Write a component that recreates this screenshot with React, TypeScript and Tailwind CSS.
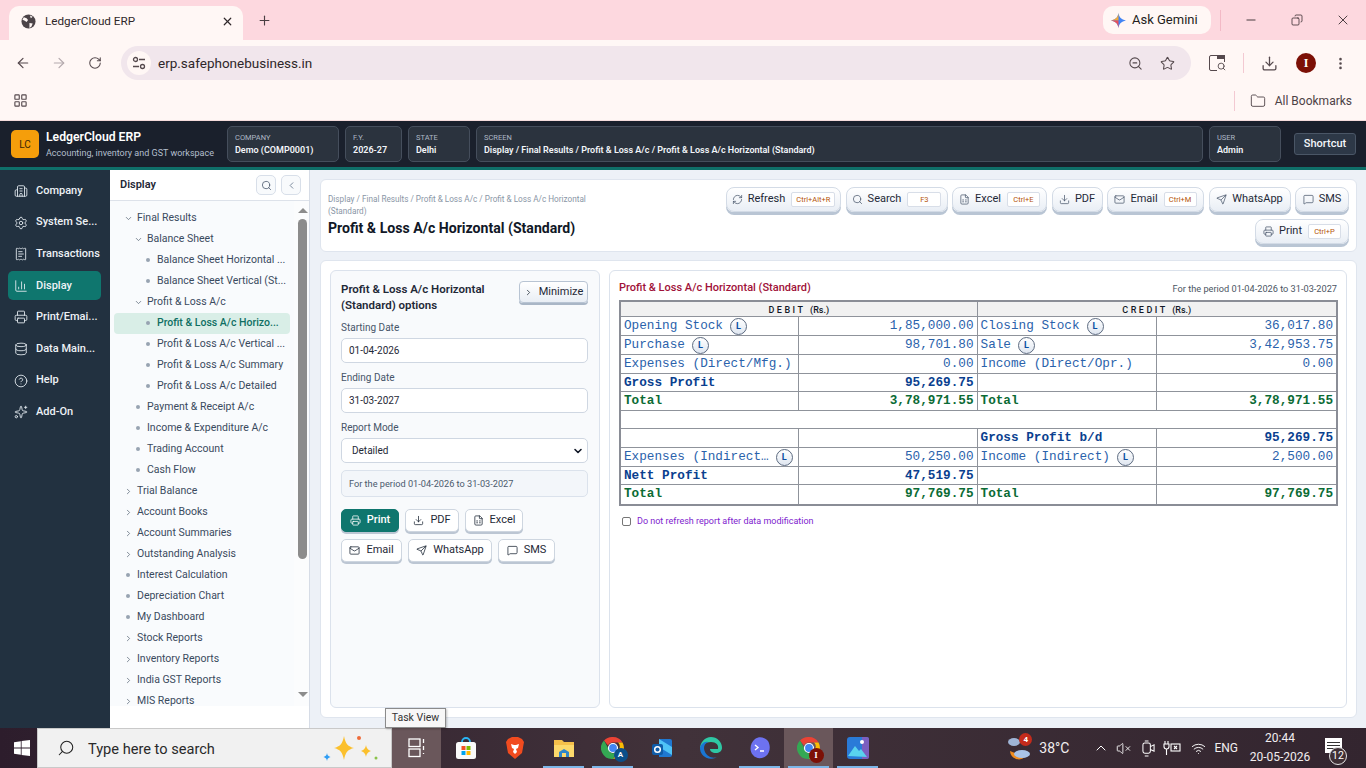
import {
  ArrowLeft,
  ArrowRight,
  BatteryWarning,
  Building2,
  ChartColumn,
  ChevronDown,
  ChevronLeft,
  ChevronRight,
  ChevronUp,
  CircleHelp,
  Copy,
  Database,
  Download,
  FileSpreadsheet,
  Folder,
  LayoutGrid,
  Mail,
  MessageSquare,
  Minus,
  MoreVertical,
  Plus,
  Printer,
  ReceiptText,
  RefreshCw,
  RotateCw,
  Search,
  Send,
  Settings,
  Sparkles,
  Star,
  VolumeX,
  Wifi,
  X,
  ZoomOut,
} from "lucide-react";
import type { ReactNode } from "react";

const railItems = [
  { label: "Company", icon: Building2 },
  { label: "System Se...", icon: Settings },
  { label: "Transactions", icon: ReceiptText },
  { label: "Display", icon: ChartColumn, active: true },
  { label: "Print/Emai...", icon: Printer },
  { label: "Data Main...", icon: Database },
  { label: "Help", icon: CircleHelp },
  { label: "Add-On", icon: Sparkles },
];

type TreeRow = { label: string; level: number; kind: "open" | "closed" | "leaf"; active?: boolean };

const treeRows: TreeRow[] = [
  { label: "Final Results", level: 0, kind: "open" },
  { label: "Balance Sheet", level: 1, kind: "open" },
  { label: "Balance Sheet Horizontal ...", level: 2, kind: "leaf" },
  { label: "Balance Sheet Vertical (St...", level: 2, kind: "leaf" },
  { label: "Profit & Loss A/c", level: 1, kind: "open" },
  { label: "Profit & Loss A/c Horizo...", level: 2, kind: "leaf", active: true },
  { label: "Profit & Loss A/c Vertical ...", level: 2, kind: "leaf" },
  { label: "Profit & Loss A/c Summary", level: 2, kind: "leaf" },
  { label: "Profit & Loss A/c Detailed", level: 2, kind: "leaf" },
  { label: "Payment & Receipt A/c", level: 1, kind: "leaf" },
  { label: "Income & Expenditure A/c", level: 1, kind: "leaf" },
  { label: "Trading Account", level: 1, kind: "leaf" },
  { label: "Cash Flow", level: 1, kind: "leaf" },
  { label: "Trial Balance", level: 0, kind: "closed" },
  { label: "Account Books", level: 0, kind: "closed" },
  { label: "Account Summaries", level: 0, kind: "closed" },
  { label: "Outstanding Analysis", level: 0, kind: "closed" },
  { label: "Interest Calculation", level: 0, kind: "leaf" },
  { label: "Depreciation Chart", level: 0, kind: "leaf" },
  { label: "My Dashboard", level: 0, kind: "leaf" },
  { label: "Stock Reports", level: 0, kind: "closed" },
  { label: "Inventory Reports", level: 0, kind: "closed" },
  { label: "India GST Reports", level: 0, kind: "closed" },
  { label: "MIS Reports", level: 0, kind: "closed" },
];

const toolButtons = [
  { label: "Refresh", icon: RefreshCw, keys: "Ctrl+Alt+R", width: "w-[115px]", kbd: "w-[44px]" },
  { label: "Search", icon: Search, keys: "F3", width: "w-[102px]", kbd: "w-[34px]" },
  { label: "Excel", icon: FileSpreadsheet, keys: "Ctrl+E", width: "w-[95px]", kbd: "w-[33px]" },
  { label: "PDF", icon: Download, width: "w-[51px]" },
  { label: "Email", icon: Mail, keys: "Ctrl+M", width: "w-[97px]", kbd: "w-[33px]" },
  { label: "WhatsApp", icon: Send, width: "w-[82px]" },
  { label: "SMS", icon: MessageSquare, width: "w-[54px]" },
  { label: "Print", icon: Printer, keys: "Ctrl+P", width: "w-[94px]", kbd: "w-[33px]" },
];

type Cell = { text?: string; ledger?: boolean };
type ReportRow = { height: string; tone: "plain" | "bold" | "total"; cells: [Cell, Cell, Cell, Cell] };

const reportTop: ReportRow[] = [
  { height: "h-[19px]", tone: "plain", cells: [{ text: "Opening Stock", ledger: true }, { text: "1,85,000.00" }, { text: "Closing Stock", ledger: true }, { text: "36,017.80" }] },
  { height: "h-[19px]", tone: "plain", cells: [{ text: "Purchase", ledger: true }, { text: "98,701.80" }, { text: "Sale", ledger: true }, { text: "3,42,953.75" }] },
  { height: "h-[19px]", tone: "plain", cells: [{ text: "Expenses (Direct/Mfg.)" }, { text: "0.00" }, { text: "Income (Direct/Opr.)" }, { text: "0.00" }] },
  { height: "h-[18px]", tone: "bold", cells: [{ text: "Gross Profit" }, { text: "95,269.75" }, {}, {}] },
  { height: "h-[19px]", tone: "total", cells: [{ text: "Total" }, { text: "3,78,971.55" }, { text: "Total" }, { text: "3,78,971.55" }] },
];

const reportBottom: ReportRow[] = [
  { height: "h-[19px]", tone: "bold", cells: [{}, {}, { text: "Gross Profit b/d" }, { text: "95,269.75" }] },
  { height: "h-[19px]", tone: "plain", cells: [{ text: "Expenses (Indirect…", ledger: true }, { text: "50,250.00" }, { text: "Income (Indirect)", ledger: true }, { text: "2,500.00" }] },
  { height: "h-[18px]", tone: "bold", cells: [{ text: "Nett Profit" }, { text: "47,519.75" }, {}, {}] },
  { height: "h-[20px]", tone: "total", cells: [{ text: "Total" }, { text: "97,769.75" }, { text: "Total" }, { text: "97,769.75" }] },
];

function ToolButton({ label, icon: Icon, keys, width, kbd }: (typeof toolButtons)[number]) {
  return (
    <button className={`flex h-[25px] items-center justify-center gap-[5px] rounded-lg border border-[#d3dbe6] bg-gradient-to-b from-white to-[#e9eef5] text-[11px] text-[#1f2937] shadow-[0_3px_0_#b9c5d4] ${width}`}>
      <Icon size={11} strokeWidth={1.6} className="text-[#475569]" />
      {label}
      {keys && (
        <span className={`ml-[1px] flex h-[15px] items-center justify-center rounded-[2px] border border-[#d8dee8] bg-white text-[7.5px] text-[#b45309] ${kbd}`}>
          {keys}
        </span>
      )}
    </button>
  );
}

function ActionButton({ label, icon: Icon, width, primary }: { label: string; icon: typeof Mail; width: string; primary?: boolean }) {
  return (
    <button
      className={`flex h-[23px] items-center justify-center gap-[6px] rounded-[5px] border text-[11px] shadow-[0_2px_0_#bcc6d3] ${width} ${
        primary ? "border-[#0f766e] bg-[#0f766e] font-medium text-white" : "border-[#ced6e0] bg-white text-[#1f2937]"
      }`}
    >
      <Icon size={11} strokeWidth={1.7} />
      {label}
    </button>
  );
}

function Field({ label, children }: { label: string; children: ReactNode }) {
  return (
    <div className="flex flex-col">
      <span className="mb-[3px] h-[14px] text-[10px] leading-[14px] text-[#475569]">{label}</span>
      {children}
    </div>
  );
}

function HeaderPill({ label, value, width }: { label: string; value: string; width: string }) {
  return (
    <div className={`flex h-[36px] shrink-0 flex-col justify-center rounded-[5px] border border-[#454e5c] bg-[#2b333e] px-[7px] ${width}`}>
      <span className="text-[7.5px] leading-[12px] text-[#aeb8c5]">{label}</span>
      <span className="text-[9px] font-semibold leading-[13px] text-[#f3f6fa]">{value}</span>
    </div>
  );
}

function LedgerBadge() {
  return (
    <span className="ml-[7px] inline-flex h-[17px] w-[17px] shrink-0 items-center justify-center rounded-full border border-[#5d6b80] bg-gradient-to-b from-white to-[#dfe6f0] font-['Inter',sans-serif] text-[9px] font-bold text-[#0b4ea2]">
      L
    </span>
  );
}

function ReportRows({ rows }: { rows: ReportRow[] }) {
  const tones = {
    plain: "text-[#2a62ab]",
    bold: "font-bold text-[#0a3f8f]",
    total: "font-bold text-[#0b6b35]",
  };
  return (
    <>
      {rows.map((row, index) => (
        <tr key={index} className={`${row.height} ${tones[row.tone]}`}>
          {row.cells.map((cell, cellIndex) => (
            <td
              key={cellIndex}
              className={`overflow-hidden border border-[#8f939b] py-0 pl-[3px] pr-[3px] align-middle leading-[16px] ${cellIndex % 2 === 1 ? "text-right" : "text-left"}`}
            >
              {cell.text && (
                <span className="flex items-center whitespace-nowrap">
                  <span className={cellIndex % 2 === 1 ? "ml-auto" : ""}>{cell.text}</span>
                  {cell.ledger && <LedgerBadge />}
                </span>
              )}
            </td>
          ))}
        </tr>
      ))}
    </>
  );
}

function ChromeLogo({ badge }: { badge: ReactNode }) {
  return (
    <span className="relative block h-[24px] w-[24px]">
      <svg viewBox="0 0 24 24" className="h-[24px] w-[24px]">
        <path d="M12 1a11 11 0 0 1 9.5 5.5H12a5.5 5.5 0 0 0-5 3L3 4.5A11 11 0 0 1 12 1z" fill="#ea4335" />
        <path d="M21.5 6.5A11 11 0 0 1 12 23l4.8-8.2a5.5 5.5 0 0 0 .2-8.3z" fill="#fbbc04" />
        <path d="M12 23A11 11 0 0 1 3 4.5l4.6 8.6A5.5 5.5 0 0 0 12 17.5l4.8-2.7z" fill="#34a853" />
        <circle cx="12" cy="12" r="4.5" fill="#4285f4" stroke="#fff" strokeWidth="1.2" />
      </svg>
      {badge}
    </span>
  );
}

function TaskIcon({ children, width, running, active }: { children: ReactNode; width: string; running?: boolean; active?: boolean }) {
  return (
    <div className={`relative flex h-full shrink-0 items-center justify-center ${width} ${active ? "bg-[#6a575b]" : ""}`}>
      {children}
      {running && <span className="absolute inset-x-[4px] bottom-0 h-[2px] bg-[#7cb6e8]" />}
    </div>
  );
}

export default function App() {
  return (
    <div className="relative flex h-[768px] w-[1366px] flex-col overflow-hidden bg-[#edf1f7] font-['Roboto',sans-serif]">
      {/* browser tabs */}
      <div className="flex h-[40px] shrink-0 items-end bg-[#fdd8df] pl-[9px]">
        <div className="flex h-[34px] w-[234px] items-center rounded-t-[10px] bg-[#fff7f5] pb-[3px] pl-[12px] pr-[9px]">
          <svg viewBox="0 0 16 16" className="h-[15px] w-[15px]">
            <circle cx="8" cy="8" r="7.5" fill="#4b4347" />
            <path d="M3 3.5l3 1 1.5 2L6 8.5 3.5 7 1.5 6zM9 9.5l3.5 .5L11 13.5 9 15zM9.500 1.500l3 1.500-2 1.500z" fill="#fff7f5" />
          </svg>
          <span className="ml-[9px] flex-1 text-[11.7px] text-[#2f272a]">LedgerCloud ERP</span>
          <X size={13} strokeWidth={2.2} className="text-[#2f272a]" />
        </div>
        <Plus size={15} strokeWidth={1.8} className="mb-[12px] ml-[14px] text-[#4a3f43]" />
        <div className="flex-1" />
        <div className="mb-[6px] flex h-[28px] w-[108px] items-center gap-[6px] rounded-[10px] bg-[#fff7f5] pl-[8px]">
          <svg viewBox="0 0 16 16" className="h-[15px] w-[15px]">
            <path d="M8 0c.6 4.5 3 7 8 8-5 1-7.4 3.500-8 8-.6-4.500-3-7-8-8 5-1 7.400-3.500 8-8z" fill="#4285f4" />
            <path d="M8 8H0c5-1 7.400-3.500 8-8z" fill="#f0a93a" />
            <path d="M8 8H0c5 1 7.400 3.500 8 8z" fill="#e8505b" />
          </svg>
          <span className="text-[13px] text-[#241d20]">Ask Gemini</span>
        </div>
        <span className="mb-[9px] ml-[9px] h-[21px] w-px bg-[#f3b9c6]" />
        <div className="mb-[10px] flex h-[21px] items-center">
          <Minus size={14} strokeWidth={1.4} className="ml-[23px] text-[#1f181b]" />
          <Copy size={12} strokeWidth={1.4} className="ml-[33px] -scale-x-100 text-[#1f181b]" />
          <X size={16} strokeWidth={1.2} className="ml-[32px] mr-[15px] text-[#1f181b]" />
        </div>
      </div>

      {/* address bar */}
      <div className="flex h-[46px] shrink-0 items-center bg-[#fff7f5] text-[#55494d]">
        <ArrowLeft size={16} strokeWidth={1.8} className="ml-[15px]" />
        <ArrowRight size={16} strokeWidth={1.8} className="ml-[20px] text-[#b4a9ad]" />
        <RotateCw size={14} strokeWidth={1.8} className="ml-[21px]" />
        <div className="ml-[19px] flex h-[34px] w-[1070px] items-center rounded-full bg-[#f1e6ec]">
          <span className="ml-[6px] flex h-[24px] w-[24px] items-center justify-center rounded-full bg-[#fff7f5]">
            <svg viewBox="0 0 14 14" className="h-[14px] w-[14px]" fill="none" stroke="currentColor" strokeWidth="1.3">
              <circle cx="3.5" cy="3.5" r="2" />
              <path d="M7 3.500h6M1 10.500h6" />
              <circle cx="10.500" cy="10.500" r="2" />
            </svg>
          </span>
          <span className="ml-[7px] flex-1 text-[13.5px] text-[#2f272a]">erp.safephonebusiness.in</span>
          <ZoomOut size={15} strokeWidth={1.7} />
          <Star size={15} strokeWidth={1.7} className="ml-[17px] mr-[16px]" />
        </div>
        <span className="relative ml-[18px] block h-[16px] w-[16px] rounded-[2px] border-[1.5px] border-[#55494d]">
          <span className="absolute -top-[1px] right-[-1px] h-[4px] w-[8px] bg-[#55494d]" />
          <Search size={9} strokeWidth={2.4} className="absolute -bottom-[1px] -right-[2px] bg-[#fff7f5]" />
        </span>
        <span className="ml-[18px] h-[20px] w-px bg-[#f3c9d2]" />
        <Download size={17} strokeWidth={1.8} className="ml-[17px]" />
        <span className="ml-[18px] flex h-[20px] w-[20px] items-center justify-center rounded-full bg-[#7c1006] font-['Liberation_Serif',serif] text-[12px] font-bold text-white">I</span>
        <MoreVertical size={15} strokeWidth={2.2} className="ml-[17px]" />
      </div>

      {/* bookmarks */}
      <div className="flex h-[35px] shrink-0 items-center border-b border-[#f5dcdc] bg-[#fff7f5] pb-[5px] text-[#55494d]">
        <LayoutGrid size={15} strokeWidth={1.8} className="ml-[13px]" />
        <div className="flex-1" />
        <span className="h-[20px] w-px bg-[#f3c9d2]" />
        <Folder size={16} strokeWidth={1.4} className="ml-[15px]" />
        <span className="ml-[9px] mr-[14px] text-[12px] text-[#4d4246]">All Bookmarks</span>
      </div>

      {/* app header */}
      <header className="flex h-[49px] shrink-0 items-start border-b-[3px] border-[#0f6f69] bg-[#1a202c] pt-[5px]">
        <div className="ml-[11px] mt-[4px] flex h-[28px] w-[28px] items-center justify-center rounded-[5px] bg-[#f59e0b] text-[10px] text-[#3b2606]">LC</div>
        <div className="ml-[7px] mt-[3px] w-[181px]">
          <div className="text-[12.2px] font-semibold leading-[17px] text-white">LedgerCloud ERP</div>
          <div className="text-[9px] leading-[14px] text-[#b4bfcc]">Accounting, inventory and GST workspace</div>
        </div>
        <div className="flex flex-1 gap-[6px]">
          <HeaderPill label="COMPANY" value="Demo (COMP0001)" width="w-[112px]" />
          <HeaderPill label="F.Y." value="2026-27" width="w-[57px]" />
          <HeaderPill label="STATE" value="Delhi" width="w-[62px]" />
          <HeaderPill label="SCREEN" value="Display / Final Results / Profit & Loss A/c / Profit & Loss A/c Horizontal (Standard)" width="w-[727px]" />
          <HeaderPill label="USER" value="Admin" width="w-[72px]" />
        </div>
        <button className="mr-[10px] mt-[7px] h-[22px] w-[62px] rounded-[3px] border border-[#4a5666] bg-[#2d3847] pt-[1px] text-[11px] font-medium text-[#f3f6fa]">Shortcut</button>
      </header>

      <div className="flex min-h-0 flex-1">
        {/* module rail */}
        <nav className="w-[110px] shrink-0 bg-[#223140] pt-[6.5px]">
          {railItems.map((item) => {
            const Icon = item.icon;
            return (
              <div key={item.label} className={`mb-[2.6px] ml-[8px] mr-[9px] flex h-[29px] items-center gap-[8px] rounded-[5px] pl-[6px] ${item.active ? "bg-[#0f766e]" : ""}`}>
                <Icon size={14} strokeWidth={1.5} className="shrink-0 text-[#e4eaf0]" />
                <span className="whitespace-nowrap text-[11px] font-medium text-[#eef2f6]">{item.label}</span>
              </div>
            );
          })}
        </nav>

        {/* tree */}
        <aside className="flex w-[200px] shrink-0 flex-col border-r border-[#d6dce6] bg-white">
          <div className="flex h-[31px] shrink-0 items-center border-b border-[#dde2ea] pl-[10px] pr-[8px]">
            <span className="flex-1 text-[11px] font-semibold text-[#1f2937]">Display</span>
            <span className="flex h-[20px] w-[20px] items-center justify-center rounded-[5px] border border-[#d8dfe9] bg-[#f8fafc] text-[#475569]">
              <Search size={11} strokeWidth={1.7} />
            </span>
            <span className="ml-[5px] flex h-[20px] w-[20px] items-center justify-center rounded-[5px] border border-[#d8dfe9] bg-[#f8fafc] text-[#64748b]">
              <ChevronLeft size={11} strokeWidth={1.8} />
            </span>
          </div>
          <div className="flex h-[505px] shrink-0 overflow-hidden bg-[#f9fbfd]">
            <div className="min-w-0 flex-1 overflow-hidden pl-[4px] pr-[4px] pt-[6.5px]">
              {treeRows.map((row) => (
                <div
                  key={row.label}
                  className={`flex h-[21px] items-center whitespace-nowrap rounded-[4px] text-[10.5px] ${row.active ? "bg-[#d9eee7] font-medium text-[#0f6f63]" : "text-[#3a4a5e]"} ${
                    row.level === 0 ? "pl-[9px]" : row.level === 1 ? "pl-[19px]" : "pl-[29px]"
                  }`}
                >
                  <span className="mr-[4px] flex w-[10px] shrink-0 items-center justify-center">
                    {row.kind === "open" && <ChevronDown size={9} strokeWidth={2} className="text-[#5b6878]" />}
                    {row.kind === "closed" && <ChevronRight size={9} strokeWidth={2} className="text-[#5b6878]" />}
                    {row.kind === "leaf" && <span className="h-[4px] w-[4px] rounded-full bg-[#98a3b1]" />}
                  </span>
                  {row.label}
                </div>
              ))}
            </div>
            <div className="flex w-[15px] shrink-0 flex-col items-center bg-[#fbfcfd] pl-[2px] pt-[7px]">
              <span className="h-0 w-0 border-x-[5px] border-b-[5px] border-x-transparent border-b-[#8c8c8c]" />
              <span className="mt-[6px] h-[340px] w-[9px] rounded-full bg-[#8c8c8c]" />
              <span className="mt-[133px] h-0 w-0 border-x-[5px] border-t-[5px] border-x-transparent border-t-[#8c8c8c]" />
            </div>
          </div>
        </aside>

        {/* main */}
        <main className="flex min-w-0 flex-1 flex-col pb-[10px] pl-[10px] pr-[9px] pt-[9px]">
          <section className="flex h-[73px] shrink-0 rounded-[6px] border border-[#dfe5ee] bg-white pl-[7px] pr-[7px]">
            <div className="w-[270px] shrink-0 pt-[13px]">
              <div className="text-[8.2px] leading-[12px] text-[#8a96a6]">Display / Final Results / Profit & Loss A/c / Profit & Loss A/c Horizontal (Standard)</div>
              <h1 className="mt-[2px] whitespace-nowrap text-[14.1px] font-bold leading-[18px] text-[#111827]">Profit & Loss A/c Horizontal (Standard)</h1>
            </div>
            <div className="ml-auto flex w-[626px] flex-wrap content-start justify-end gap-x-[4.5px] gap-y-[7px] pt-[7px]">
              {toolButtons.map((button) => (
                <ToolButton key={button.label} {...button} />
              ))}
            </div>
          </section>

          <section className="mt-[8px] flex min-h-0 flex-1 gap-[9px] rounded-[6px] border border-[#dfe5ee] bg-white p-[9px]">
            {/* options */}
            <div className="flex w-[270px] shrink-0 flex-col rounded-[6px] border border-[#dbe2ec] bg-[#f8fafc] pl-[10px] pr-[11px] pt-[10px]">
              <div className="flex h-[40px] items-start justify-between">
                <div className="w-[165px] text-[11.5px] font-semibold leading-[16px] text-[#1f2937]">Profit & Loss A/c Horizontal (Standard) options</div>
                <button className="flex h-[22px] w-[69px] items-center justify-center gap-[6px] rounded-[4px] border border-[#b8c4d3] bg-gradient-to-b from-white to-[#e9eef5] text-[11px] text-[#1f2937] shadow-[0_2px_0_#a9b6c6]">
                  <ChevronRight size={9} strokeWidth={2} />
                  Minimize
                </button>
              </div>
              <div className="flex flex-col gap-[8px]">
                <Field label="Starting Date">
                  <div className="flex h-[25px] items-center rounded-[5px] border border-[#cfd7e2] bg-white px-[7px] text-[10px] text-[#1f2937]">01-04-2026</div>
                </Field>
                <Field label="Ending Date">
                  <div className="flex h-[25px] items-center rounded-[5px] border border-[#cfd7e2] bg-white px-[7px] text-[10px] text-[#1f2937]">31-03-2027</div>
                </Field>
                <Field label="Report Mode">
                  <div className="flex h-[25px] items-center justify-between rounded-[5px] border border-[#cfd7e2] bg-white pl-[10px] pr-[3px] text-[10px] text-[#1f2937]">
                    Detailed
                    <ChevronDown size={12} strokeWidth={3.2} className="text-[#111827]" />
                  </div>
                </Field>
              </div>
              <div className="mt-[7px] flex h-[27px] items-center rounded-[5px] border border-[#dbe2ec] bg-[#f3f6fa] px-[7px] text-[9.2px] text-[#4b5a6d]">For the period 01-04-2026 to 31-03-2027</div>
              <div className="mt-[12px] flex flex-wrap gap-x-[6px] gap-y-[7px]">
                <ActionButton label="Print" icon={Printer} width="w-[58px]" primary />
                <ActionButton label="PDF" icon={Download} width="w-[54px]" />
                <ActionButton label="Excel" icon={FileSpreadsheet} width="w-[58px]" />
                <div className="w-full" />
              </div>
              <div className="flex gap-[6px]">
                <ActionButton label="Email" icon={Mail} width="w-[61px]" />
                <ActionButton label="WhatsApp" icon={Send} width="w-[84px]" />
                <ActionButton label="SMS" icon={MessageSquare} width="w-[57px]" />
              </div>
            </div>

            {/* report */}
            <div className="flex min-w-0 flex-1 flex-col rounded-[6px] border border-[#dbe2ec] bg-white px-[9px] pt-[9px]">
              <div className="flex h-[17px] items-center justify-between">
                <span className="text-[11px] font-medium text-[#9f1239]">Profit & Loss A/c Horizontal (Standard)</span>
                <span className="text-[9.2px] text-[#4b5563]">For the period 01-04-2026 to 31-03-2027</span>
              </div>
              <table className="mt-[3px] w-[717px] table-fixed border-collapse border-2 border-[#8a8d96] font-['Liberation_Mono',monospace] text-[12.7px]">
                <colgroup>
                  <col className="w-[178px]" />
                  <col className="w-[179px]" />
                  <col className="w-[179px]" />
                  <col className="w-[181px]" />
                </colgroup>
                <tbody>
                  <tr className="h-[15px] bg-[#f1f1f1] font-['Roboto',sans-serif] text-[9px] font-medium text-[#111827]">
                    <td colSpan={2} className="border border-[#8f939b] p-0 pt-[2px] text-center leading-[12px] tracking-[2.5px]">DEBIT <span className="tracking-normal">(Rs.)</span></td>
                    <td colSpan={2} className="border border-[#8f939b] p-0 pt-[2px] text-center leading-[12px] tracking-[2.5px]">CREDIT <span className="tracking-normal">(Rs.)</span></td>
                  </tr>
                  <ReportRows rows={reportTop} />
                  <tr className="h-[18px]">
                    <td colSpan={4} className="border border-[#8f939b]" />
                  </tr>
                  <ReportRows rows={reportBottom} />
                </tbody>
              </table>
              <label className="ml-[3px] mt-[9px] flex items-center gap-[6px] text-[9px] text-[#7e22ce]">
                <span className="h-[9px] w-[9px] rounded-[2px] border border-[#767676] bg-white" />
                Do not refresh report after data modification
              </label>
            </div>
          </section>
        </main>
      </div>

      {/* windows taskbar */}
      <footer className="flex h-[40px] shrink-0 items-center bg-gradient-to-r from-[#2d1d2c] via-[#41323a] to-[#33252f] text-white">
        <div className="flex h-full w-[37px] shrink-0 items-center justify-center pl-[6px]">
          <svg viewBox="0 0 16 16" className="h-[16px] w-[16px]" fill="#fff">
            <path d="M0 2.2l6.8-1v6.4H0zM7.6 1.1L16 0v7.6H7.6zM0 8.4h6.8v6.4l-6.8-1zM7.6 8.4H16V16l-8.4-1.1z" />
          </svg>
        </div>
        <div className="flex h-full w-[355px] shrink-0 items-center border border-[#c9c9c9] bg-[#f1f1f1]">
          <Search size={18} strokeWidth={1.4} className="ml-[19px] -scale-x-100 text-[#222]" />
          <span className="ml-[13px] mt-[3px] flex-1 text-[14.6px] text-[#2a2a2a]">Type here to search</span>
          <svg viewBox="0 0 60 30" className="mr-[11px] h-[30px] w-[60px]">
            <path d="M24 3c1.5 8 4 10.5 10 12-6 1.5-8.5 4-10 12-1.5-8-4-10.5-10-12 6-1.5 8.5-4 10-12z" fill="#fbc02d" />
            <path d="M46 12c.7 3.5 1.8 4.6 5 6-3.2 1.4-4.3 2.5-5 6-.7-3.5-1.8-4.6-5-6 3.2-1.4 4.3-2.5 5-6z" fill="#fbc02d" />
            <path d="M7 20c.4 2.5 1 3 3.5 4-2.5 1-3.1 1.5-3.5 4-.4-2.5-1-3-3.5-4 2.5-1 3.1-1.5 3.5-4z" fill="#2f9df4" />
            <circle cx="39" cy="5" r="2" fill="#ef6c3a" />
            <circle cx="56" cy="25" r="1.5" fill="#8bc34a" />
          </svg>
        </div>
        <TaskIcon width="w-[49px]" active>
          <svg viewBox="0 0 18 20" className="h-[20px] w-[18px]" fill="none" stroke="#fff" strokeWidth="1.3">
            <rect x="1" y="1" width="11" height="7.5" />
            <rect x="1" y="11" width="11" height="7.5" />
            <path d="M15.5 1v4M15.5 8v4M15.5 15v1" />
          </svg>
        </TaskIcon>
        <div className="flex h-full items-center">
          <TaskIcon width="w-[49px]">
            <svg viewBox="0 0 24 24" className="h-[24px] w-[24px]">
              <path d="M8 6a4 4 0 0 1 8 0" fill="none" stroke="#29b6f6" strokeWidth="1.8" />
              <rect x="2" y="6" width="20" height="17" rx="2.5" fill="#fafafa" />
              <rect x="7.5" y="10" width="4" height="4" fill="#f25022" />
              <rect x="12.5" y="10" width="4" height="4" fill="#7fba00" />
              <rect x="7.5" y="15" width="4" height="4" fill="#00a4ef" />
              <rect x="12.5" y="15" width="4" height="4" fill="#ffb900" />
            </svg>
          </TaskIcon>
          <TaskIcon width="w-[49px]">
            <svg viewBox="0 0 24 24" className="h-[24px] w-[24px]">
              <path d="M5 3l4-2h6l4 2 2 3-2 11-7 6-7-6L3 6z" fill="#f14b1f" />
              <path d="M8 8l3 1h2l3-1-1 4-2 1 1 3-2 2-2-2 1-3-2-1z" fill="#fff" />
            </svg>
          </TaskIcon>
          <TaskIcon width="w-[49px]" running>
            <svg viewBox="0 0 24 24" className="h-[24px] w-[24px]">
              <path d="M2 4h8l2 2h10v15H2z" fill="#f5c04a" />
              <path d="M2 9h20v12H2z" fill="#fcd96b" />
              <path d="M7 21v-5l5-3 5 3v5z" fill="#2f86c9" />
              <rect x="10" y="17" width="4" height="4" fill="#fcd96b" />
            </svg>
          </TaskIcon>
          <TaskIcon width="w-[49px]" running>
            <ChromeLogo
              badge={<span className="absolute -bottom-[2px] -right-[3px] flex h-[14px] w-[14px] items-center justify-center rounded-full bg-[#0b4f8a] text-[8px] font-semibold text-white">A</span>}
            />
          </TaskIcon>
          <TaskIcon width="w-[49px]">
            <svg viewBox="0 0 24 24" className="h-[24px] w-[24px]">
              <path d="M9 3h11a2 2 0 0 1 2 2v14a2 2 0 0 1-2 2H9z" fill="#1f78d1" />
              <path d="M9 3l13 8v8L9 11z" fill="#4fc3f7" />
              <rect x="2" y="8" width="11" height="11" rx="2" fill="#0f5ca8" />
              <circle cx="7.5" cy="13.5" r="2.8" fill="none" stroke="#fff" strokeWidth="1.5" />
            </svg>
          </TaskIcon>
          <TaskIcon width="w-[49px]">
            <svg viewBox="0 0 24 24" className="h-[24px] w-[24px]">
              <path d="M12 1a11 11 0 0 1 11 11c0 3-3 5-6 5-4 0-6-2-6-4h8c1-4-2-7-7-7C6 6 3 9 1 13 1 6 6 1 12 1z" fill="#2fc7a4" />
              <path d="M1 13c0-4 4-8 8-7-4 2-5 6-3 10 2 4 7 7 12 5a11 11 0 0 1-17-8z" fill="#1a76d2" />
            </svg>
          </TaskIcon>
          <TaskIcon width="w-[49px]" running>
            <svg viewBox="0 0 24 24" className="h-[24px] w-[24px]">
              <path d="M7 3c4-3 10-2 13 2 3 5 2 12-2 15-4 3-10 3-13-1C1 15 2 7 7 3z" fill="#6d72f0" />
              <path d="M7 9l3 2.5L7 14M12 15h4" fill="none" stroke="#fff" strokeWidth="1.4" />
            </svg>
          </TaskIcon>
          <TaskIcon width="w-[49px]" running active>
            <ChromeLogo
              badge={<span className="absolute -bottom-[3px] -right-[3px] flex h-[15px] w-[15px] items-center justify-center rounded-full bg-[#7c1006] font-['Liberation_Serif',serif] text-[9px] font-bold text-white">I</span>}
            />
          </TaskIcon>
          <TaskIcon width="w-[49px]" running>
            <svg viewBox="0 0 24 24" className="h-[24px] w-[24px]">
              <rect x="1" y="1" width="22" height="22" rx="3" fill="#2a7bd8" />
              <path d="M16 1h5a2 2 0 0 1 2 2v18a2 2 0 0 1-2 2h-5z" fill="#7b5fc0" />
              <path d="M2 20l7-10 4 5 2-2 6 8z" fill="#59d3ee" />
              <circle cx="16" cy="6" r="2" fill="#fff" />
            </svg>
          </TaskIcon>
        </div>
        <div className="flex-1" />
        <div className="relative h-[28px] w-[25px] shrink-0">
          <svg viewBox="0 0 25 28" className="h-[28px] w-[25px]">
            <path d="M3 17a9 9 0 0 0 15 6z" fill="#f08c1e" />
            <ellipse cx="7" cy="8" rx="6" ry="4" fill="#9fb5d6" />
            <ellipse cx="15" cy="20" rx="8" ry="4" fill="#a9c4e8" />
          </svg>
          <span className="absolute -top-[1px] right-0 flex h-[13px] w-[13px] items-center justify-center rounded-full bg-[#c42b1c] text-[8px] font-bold text-white">4</span>
        </div>
        <span className="ml-[7px] text-[14px] text-[#f2eef0]">38°C</span>
        <ChevronUp size={16} strokeWidth={1.5} className="ml-[24px]" />
        <VolumeX size={15} strokeWidth={1.4} className="ml-[7px]" />
        <svg viewBox="0 0 14 18" className="ml-[11px] h-[17px] w-[13px]" fill="none" stroke="#fff" strokeWidth="1.1">
          <rect x="1" y="3" width="8" height="11" rx="2" />
          <path d="M9 7l4-2v7l-4-2M3 1h4M3 17h4" />
        </svg>
        <svg viewBox="0 0 18 16" className="ml-[8px] h-[16px] w-[18px]" fill="none" stroke="#fff" strokeWidth="1.1">
          <path d="M2 1v3M5 1v3M1 4h5v2.500a2.500 2.500 0 0 1-5 0zM3.500 9v6" />
          <rect x="8" y="4" width="9" height="7" />
          <path d="M11 6l3 3M14 6l-3 3" />
        </svg>
        <Wifi size={15} strokeWidth={1.5} className="ml-[10px]" />
        <span className="ml-[8px] text-[12px] text-[#f2eef0]">ENG</span>
        <div className="ml-[11px] w-[62px] text-center text-[12px] leading-[19px] text-[#f2eef0]">
          <div>20:44</div>
          <div>20-05-2026</div>
        </div>
        <div className="relative ml-[14px] mr-[20px] h-[28px] w-[21px] shrink-0">
          <span className="absolute left-0 top-[4px] flex h-[15px] w-[17px] flex-col justify-center gap-[2px] bg-white px-[2px]">
            <span className="h-px bg-[#333]" />
            <span className="h-px bg-[#333]" />
            <span className="h-px bg-[#333]" />
          </span>
          <span className="absolute -right-[1px] bottom-[-3px] flex h-[18px] w-[18px] items-center justify-center rounded-full border border-[#e5e5e5] bg-[#3f3036] text-[10.5px] text-white">12</span>
        </div>
      </footer>

      {/* hover tooltip for task view */}
      <div className="absolute left-[385px] top-[708px] flex h-[20px] w-[61px] items-center justify-center border border-[#8b8b8b] bg-[#f7f7f7] text-[10.5px] text-[#333] shadow-[1px_1px_2px_rgba(0,0,0,0.25)]">
        Task View
      </div>
    </div>
  );
}
